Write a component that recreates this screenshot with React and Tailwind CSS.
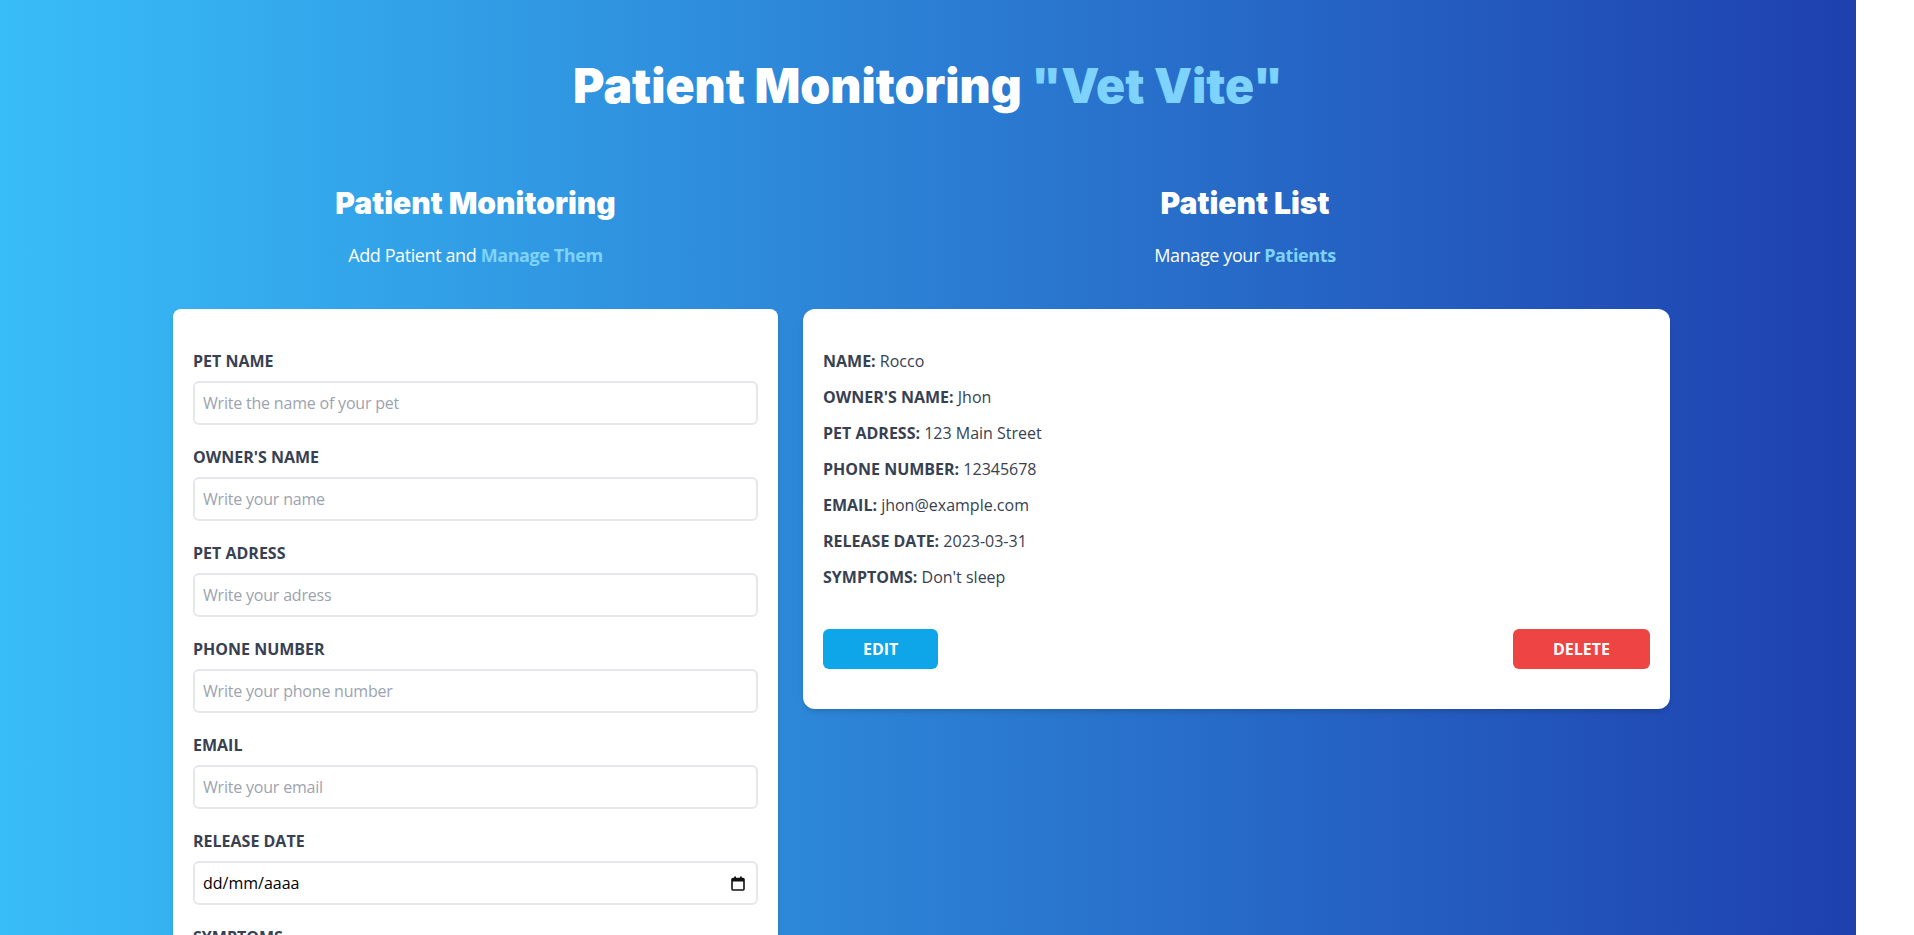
import React from "react";

const body = { fontFamily: '"Open Sans", "Noto Sans", sans-serif' };
const heading = { fontFamily: 'Inter, Lato, "Noto Sans", sans-serif' };

function Field({ label, placeholder }) {
  return (
    <div className="mb-5">
      <label className="block text-[#374151] uppercase font-bold text-base leading-6">{label}</label>
      <input
        type="text"
        placeholder={placeholder}
        className="border-2 border-[#e5e7eb] w-full p-2 mt-2 placeholder-[#9ca3af] rounded-md text-base leading-6 outline-none tracking-[-0.2px]"
        style={body}
      />
    </div>
  );
}

function CalendarIcon() {
  return (
    <svg width="14" height="15" viewBox="0 0 14 15" fill="none">
      <rect x="1" y="2.5" width="12" height="11.5" rx="1" stroke="#111" strokeWidth="1.6" />
      <rect x="1" y="2.5" width="12" height="3" fill="#111" />
      <rect x="3.2" y="0.5" width="1.8" height="3" fill="#111" />
      <rect x="9" y="0.5" width="1.8" height="3" fill="#111" />
    </svg>
  );
}

function Row({ label, value }) {
  return (
    <p className="font-bold mb-3 text-[#374151] uppercase text-base leading-6">
      {label}: <span className="font-normal normal-case">{value}</span>
    </p>
  );
}

export default function App() {
  return (
    <div className="w-full h-[935px] overflow-hidden bg-white" style={body}>
      <div className="w-[1856px] h-full bg-[linear-gradient(to_right,#38bdf8,#1e40af)] pt-[62px]">
        <h1 className="font-black text-5xl leading-[48px] text-center text-white" style={heading}>
          Patient Monitoring <span className="text-[#7dd3fc]">"Vet Vite"</span>
        </h1>

        <div className="flex pl-[173px] mt-[75px] items-start">
          <div className="w-[605px]">
            <h2 className="font-black text-3xl leading-9 text-center text-white" style={heading}>
              Patient Monitoring
            </h2>
            <p className="text-lg leading-7 mt-5 text-center mb-10 text-white tracking-[-0.4px]">
              Add Patient and <span className="text-[#7dd3fc] font-bold">Manage Them</span>
            </p>
            <form className="bg-white shadow-md rounded-lg py-10 px-5">
              <Field label="Pet Name" placeholder="Write the name of your pet" />
              <Field label="Owner's Name" placeholder="Write your name" />
              <Field label="Pet Adress" placeholder="Write your adress" />
              <Field label="Phone Number" placeholder="Write your phone number" />
              <Field label="Email" placeholder="Write your email" />
              <div className="mb-5">
                <label className="block text-[#374151] uppercase font-bold text-base leading-6">Release Date</label>
                <div className="border-2 border-[#e5e7eb] w-full p-2 mt-2 rounded-md text-base leading-6 flex items-center justify-between text-black">
                  <span>dd/mm/aaaa</span>
                  <span className="mr-[3px] flex items-center">
                    <CalendarIcon />
                  </span>
                </div>
              </div>
              <div className="mb-5">
                <label className="block text-[#374151] uppercase font-bold text-base leading-6">Symptoms</label>
                <textarea
                  className="border-2 border-[#e5e7eb] w-full p-2 mt-2 placeholder-[#9ca3af] rounded-md text-base leading-6"
                  placeholder="Describe the symptoms"
                  style={body}
                />
              </div>
            </form>
          </div>

          <div className="w-[884px] ml-[25px]">
            <h2 className="font-black text-3xl leading-9 text-center text-white" style={heading}>
              Patient List
            </h2>
            <p className="text-lg leading-7 mt-5 text-center mb-10 text-white tracking-[-0.4px]">
              Manage your <span className="text-[#7dd3fc] font-bold">Patients</span>
            </p>
            <div className="w-[867px] bg-white shadow-md px-5 py-10 rounded-xl">
              <Row label="Name" value="Rocco" />
              <Row label="Owner's Name" value="Jhon" />
              <Row label="Pet Adress" value="123 Main Street" />
              <Row label="Phone Number" value="12345678" />
              <Row label="Email" value="jhon@example.com" />
              <Row label="Release Date" value="2023-03-31" />
              <Row label="Symptoms" value="Don't sleep" />
              <div className="flex justify-between mt-10">
                <button className="py-2 px-10 bg-[#0ea5e9] text-white font-bold uppercase rounded-md text-base leading-6">
                  Edit
                </button>
                <button className="py-2 px-10 bg-[#ef4444] text-white font-bold uppercase rounded-md text-base leading-6">
                  Delete
                </button>
              </div>
            </div>
          </div>
        </div>
      </div>
    </div>
  );
}
